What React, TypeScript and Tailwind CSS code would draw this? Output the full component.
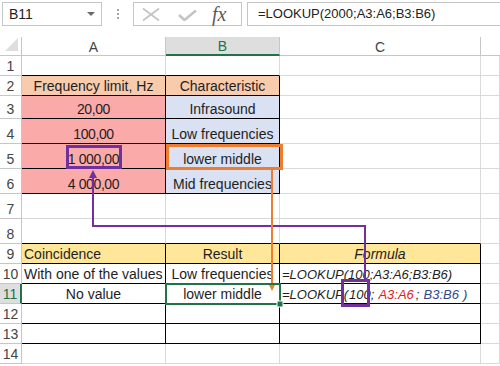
import React from "react";

type Cell = {
  v?: React.ReactNode;
  bg?: string;
  r?: boolean;
  b?: boolean;
  al?: "l" | "c";
  it?: boolean;
  f?: boolean;
};

const PEACH = "bg-[#f8cbad]";
const PINK = "bg-[#fbaaaa]";
const BLUE = "bg-[#d9e1f2]";
const GOLD = "bg-[#ffe699]";

const colW = ["w-[144px]", "w-[114px]", "w-[201px]", "w-[19px]"];
const rowH: Record<number, string> = {
  20: "h-[20px]",
  23: "h-[23px]",
  25: "h-[25px]",
};

const formula11 = (
  <>
    <span>=LOOKUP(</span>
    <span className="ml-[1px]">100</span>
    <span>;</span>
    <span className="ml-[4px] text-[#e0201c]">A3:A6</span>
    <span className="ml-[2px]">;</span>
    <span className="ml-[4px] text-[#2f4b8c]">B3:B6</span>
    <span className="ml-[4px] text-[#2f4b8c]">)</span>
  </>
);

const num = (s: string) => <span className="tracking-[-0.4px]">{s}</span>;

const rows: { n: number; h: number; cells: Cell[] }[] = [
  { n: 1, h: 20, cells: [{ b: true }, { b: true }, {}, {}] },
  {
    n: 2,
    h: 20,
    cells: [
      { v: "Frequency limit, Hz", bg: PEACH, r: true, b: true },
      { v: "Characteristic", bg: PEACH, r: true, b: true },
      {},
      {},
    ],
  },
  {
    n: 3,
    h: 23,
    cells: [
      { v: num("20,00"), bg: PINK, r: true, b: true },
      { v: "Infrasound", bg: BLUE, r: true, b: true },
      {},
      {},
    ],
  },
  {
    n: 4,
    h: 25,
    cells: [
      { v: num("100,00"), bg: PINK, r: true, b: true },
      { v: "Low frequencies", bg: BLUE, r: true, b: true },
      {},
      {},
    ],
  },
  {
    n: 5,
    h: 25,
    cells: [
      { v: num("1 000,00"), bg: PINK, r: true, b: true },
      { v: "lower middle", bg: BLUE, r: true, b: true },
      {},
      {},
    ],
  },
  {
    n: 6,
    h: 25,
    cells: [
      { v: num("4 000,00"), bg: PINK, r: true, b: true },
      { v: "Mid frequencies", bg: BLUE, r: true, b: true },
      {},
      {},
    ],
  },
  { n: 7, h: 25, cells: [{}, {}, {}, {}] },
  { n: 8, h: 25, cells: [{ b: true }, { b: true }, { b: true }, {}] },
  {
    n: 9,
    h: 20,
    cells: [
      { v: "Coincidence", bg: GOLD, r: true, b: true, al: "l" },
      { v: "Result", bg: GOLD, r: true, b: true },
      { v: "Formula", bg: GOLD, r: true, b: true, it: true },
      {},
    ],
  },
  {
    n: 10,
    h: 20,
    cells: [
      { v: "With one of the values", r: true, b: true, al: "l" },
      { v: "Low frequencies", r: true, b: true },
      { v: "=LOOKUP(100;A3:A6;B3:B6)", r: true, b: true, al: "l", it: true, f: true },
      {},
    ],
  },
  {
    n: 11,
    h: 20,
    cells: [
      { v: "No value", r: true, b: true },
      { v: "lower middle", r: true, b: true },
      { v: formula11, r: true, b: true, al: "l", it: true, f: true },
      {},
    ],
  },
  { n: 12, h: 20, cells: [{ r: true, b: true }, { r: true, b: true }, { r: true, b: true }, {}] },
  { n: 13, h: 20, cells: [{ r: true, b: true }, { r: true, b: true }, { r: true, b: true }, {}] },
  { n: 14, h: 20, cells: [{}, {}, {}, {}] },
];

function FormulaBar() {
  return (
    <div className="flex h-[37px] items-start pl-[2px] pt-[2px]">
      <div className="relative flex h-[24px] w-[100px] items-center border border-[#c6c6c6] pl-[6px] text-[14px] text-[#222]">
        B11
        <span className="absolute right-[6px] top-[9px] h-0 w-0 border-x-[4px] border-t-[4px] border-x-transparent border-t-[#6b6b6b]" />
      </div>
      <div className="flex h-[24px] w-[31px] flex-col items-center justify-center gap-[2px]">
        <span className="h-[2px] w-[2px] bg-[#a6a6a6]" />
        <span className="h-[2px] w-[2px] bg-[#a6a6a6]" />
        <span className="h-[2px] w-[2px] bg-[#a6a6a6]" />
      </div>
      <div className="flex h-[24px] w-[109px] items-center border border-[#c6c6c6]">
        <svg width="18" height="13" viewBox="0 0 18 13" className="ml-[8px]">
          <path d="M1 0.5 L17 12.5 M17 0.5 L1 12.5" stroke="#c4c4c4" strokeWidth="1.8" fill="none" />
        </svg>
        <svg width="19" height="11" viewBox="0 0 19 11" className="ml-[18px] mt-[2px]">
          <path d="M1 5 L6.5 10 L18 0.5" stroke="#c4c4c4" strokeWidth="2.6" fill="none" />
        </svg>
        <span className="ml-[15px] font-['Liberation_Serif',serif] text-[20px] italic leading-none text-[#5a5a5a]">
          fx
        </span>
      </div>
      <div className="ml-[5px] flex h-[24px] flex-1 items-center border border-r-0 border-[#c6c6c6] pl-[10px] text-[13px] text-[#222]">
        =LOOKUP(2000;A3:A6;B3:B6)
      </div>
    </div>
  );
}

function HeaderRow() {
  return (
    <div className="flex h-[19px] text-[14px]">
      <div className="relative w-[22px] border-b border-r border-[#c6c6c6] bg-white">
        <svg width="22" height="19" className="absolute left-0 top-0">
          <path d="M18 1 L18 14 L5 14 Z" fill="#dedede" />
        </svg>
      </div>
      <div className="flex w-[144px] items-center justify-center border-b border-r border-[#c6c6c6] pt-[2px] text-[#444]">
        A
      </div>
      <div className="flex w-[114px] items-center justify-center border-b-2 border-r border-b-[#217346] border-r-[#c6c6c6] bg-[#dedede] pt-[2px] text-[#217346]">
        B
      </div>
      <div className="flex w-[201px] items-center justify-center border-b border-r border-[#c6c6c6] pt-[2px] text-[#444]">
        C
      </div>
      <div className="w-[19px] border-b border-[#c6c6c6]" />
    </div>
  );
}

function SheetCell({ c, w }: { c: Cell; w: string }) {
  return (
    <div
      className={[
        "flex items-end overflow-hidden whitespace-nowrap border-b border-r leading-[17px]",
        w,
        c.r ? "border-r-black" : "border-r-[#d9d9d9]",
        c.b ? "border-b-black" : "border-b-[#d9d9d9]",
        c.bg ?? "",
        c.al === "l" ? "justify-start pl-[2px]" : "justify-center",
        c.it ? "italic" : "",
        c.f ? "text-[13px]" : "text-[14px]",
      ].join(" ")}
    >
      {c.v}
    </div>
  );
}

function Overlay() {
  return (
    <svg width="500" height="366" className="pointer-events-none absolute left-0 top-0">
      {/* purple: A5 -> C11 */}
      <rect x="67.5" y="146.5" width="53" height="21" fill="none" stroke="#7030a0" strokeWidth="3" />
      <path d="M93 176 L93 226 L365 226 L365 280" fill="none" stroke="#7030a0" strokeWidth="2" />
      <path d="M89 178 L93 170 L97 178 Z" fill="#7030a0" />
      <rect x="342.5" y="280.5" width="26" height="25" fill="none" stroke="#7030a0" strokeWidth="3" />
      {/* orange: B5 -> B11 */}
      <rect x="167.5" y="145.5" width="114" height="23" fill="none" stroke="#ed7d31" strokeWidth="3" />
      <path d="M272 170 L272 284" fill="none" stroke="#ed7d31" strokeWidth="2" />
      <path d="M268 283 L276 283 L272 291 Z" fill="#ed7d31" />
      {/* selection */}
      <rect x="166" y="284" width="114" height="20" fill="none" stroke="#217346" strokeWidth="2" />
      <rect x="277" y="301" width="6" height="6" fill="#217346" stroke="#fff" strokeWidth="1" />
    </svg>
  );
}

export default function App() {
  return (
    <div className="relative h-[366px] w-[500px] overflow-hidden bg-white font-['Liberation_Sans',Arial,sans-serif] text-[#1e1e1e]">
      <FormulaBar />
      <HeaderRow />
      {rows.map((row) => (
        <div key={row.n} className={"flex " + rowH[row.h]}>
          <div
            className={
              row.n === 11
                ? "flex w-[22px] items-end justify-center border-b border-r-2 border-b-[#c6c6c6] border-r-[#217346] bg-[#dedede] text-[14px] leading-[17px] text-[#217346]"
                : "flex w-[22px] items-end justify-center border-b border-r border-[#c6c6c6] text-[14px] leading-[17px] text-[#444]"
            }
          >
            {row.n}
          </div>
          {row.cells.map((c, i) => (
            <SheetCell key={i} c={c} w={colW[i]} />
          ))}
        </div>
      ))}
      <Overlay />
    </div>
  );
}
